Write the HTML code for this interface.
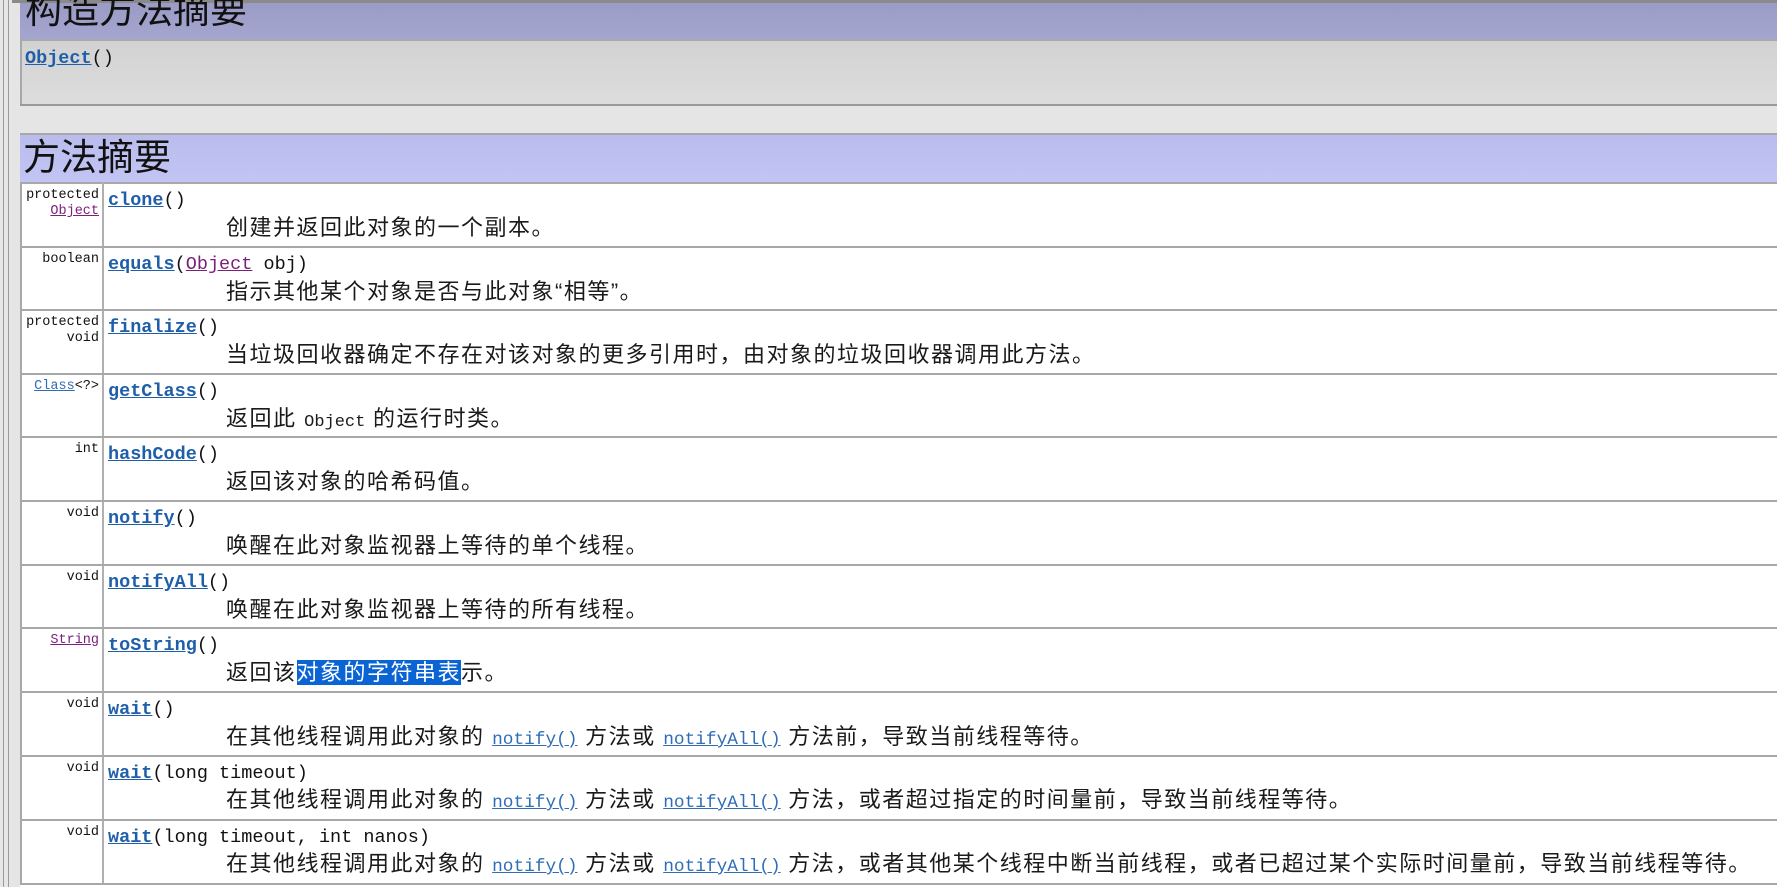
<!DOCTYPE html>
<html><head><meta charset="utf-8"><style>
body{margin:0;width:1777px;height:887px;overflow:hidden;background:#e4e5e4;position:relative;font-family:"Liberation Sans","Noto Sans CJK SC",sans-serif}
.a{position:absolute}
.vl{position:absolute;top:0;height:887px;width:1px;background:#9a9a9a}
.hl{position:absolute;left:20px;right:0;height:2px;background:#a8a8a8}
.t{position:absolute;right:1678px;text-align:right;font-family:"Liberation Mono",monospace;font-size:13.5px;line-height:16px;color:#111;white-space:nowrap}
.m{position:absolute;left:108px;font-family:"Liberation Mono",monospace;font-size:18.5px;color:#111;white-space:nowrap;line-height:22px}
.m b{color:#1f5fa9;text-decoration:underline}
.d{position:absolute;left:226px;font-family:"Liberation Sans","Noto Sans CJK SC",sans-serif;font-size:22px;color:#1a1a1a;white-space:nowrap;line-height:26px;letter-spacing:1.5px}
.d a{font-family:"Liberation Mono",monospace;font-size:17.8px;color:#2f6db5;text-decoration:underline;letter-spacing:0}
.mo{font-family:"Liberation Mono",monospace;font-size:17px;letter-spacing:0}
.pu{color:#7a1f7a;text-decoration:underline}
.bl{color:#2f6db5;text-decoration:underline}
</style></head><body>
<div class="a" style="left:0;top:0;width:1777px;height:3px;background:#8a8a8a"></div>
<div class="a" style="left:0;top:0;width:12px;height:887px;background:#e6e6e6"></div>
<div class="vl" style="left:3px"></div><div class="vl" style="left:8px"></div>
<div class="a" style="left:20px;top:3px;right:0;height:37px;background:linear-gradient(#9a9cc6,#a4a6d0)"></div>
<div class="a" style="left:25px;top:-14px;font-size:37px;color:#111;line-height:50px">构造方法摘要</div>
<div class="hl" style="top:39px"></div>
<div class="a" style="left:20px;top:41px;right:0;height:64px;background:linear-gradient(#d2d2d2,#dddddd)"></div>
<div class="a" style="left:20px;top:41px;width:2px;height:64px;background:#a8a8a8"></div>
<div class="m" style="left:25px;top:48px"><b>Object</b>()</div>
<div class="hl" style="top:104px;background:#999"></div>
<div class="hl" style="top:133px"></div>
<div class="a" style="left:20px;top:135px;right:0;height:47px;background:linear-gradient(#b9bcec,#c2c5f4)"></div>
<div class="a" style="left:23px;top:134px;font-size:37px;color:#111;line-height:48px">方法摘要</div>
<div class="hl" style="top:182px"></div>
<div class="a" style="left:20px;top:184px;right:0;height:703px;background:#fff"></div>
<div class="a" style="left:20px;top:182px;width:2px;height:703px;background:#a8a8a8"></div>
<div class="a" style="left:102px;top:182px;width:2px;height:703px;background:#b0b0b0"></div>

<div class="hl" style="top:246px"></div><div class="hl" style="top:309px"></div><div class="hl" style="top:373px"></div><div class="hl" style="top:436px"></div><div class="hl" style="top:500px"></div><div class="hl" style="top:564px"></div><div class="hl" style="top:627px"></div><div class="hl" style="top:691px"></div><div class="hl" style="top:755px"></div><div class="hl" style="top:819px"></div><div class="hl" style="top:883px"></div>

<div class="t" style="top:188px">protected<br><span class="pu">Object</span></div>
<div class="m" style="top:190px"><b>clone</b>()</div>
<div class="d" style="top:215px">创建并返回此对象的一个副本。</div>

<div class="t" style="top:252px">boolean</div>
<div class="m" style="top:254px"><b>equals</b>(<span class="pu">Object</span> obj)</div>
<div class="d" style="top:279px">指示其他某个对象是否与此对象“相等”。</div>

<div class="t" style="top:315px">protected<br>void</div>
<div class="m" style="top:317px"><b>finalize</b>()</div>
<div class="d" style="top:342px">当垃圾回收器确定不存在对该对象的更多引用时，由对象的垃圾回收器调用此方法。</div>

<div class="t" style="top:379px"><span class="bl">Class</span>&lt;?&gt;</div>
<div class="m" style="top:381px"><b>getClass</b>()</div>
<div class="d" style="top:406px">返回此 <span class="mo">Object</span> 的运行时类。</div>

<div class="t" style="top:442px">int</div>
<div class="m" style="top:444px"><b>hashCode</b>()</div>
<div class="d" style="top:469px">返回该对象的哈希码值。</div>

<div class="t" style="top:506px">void</div>
<div class="m" style="top:508px"><b>notify</b>()</div>
<div class="d" style="top:533px">唤醒在此对象监视器上等待的单个线程。</div>

<div class="t" style="top:570px">void</div>
<div class="m" style="top:572px"><b>notifyAll</b>()</div>
<div class="d" style="top:597px">唤醒在此对象监视器上等待的所有线程。</div>

<div class="t" style="top:633px"><span class="pu">String</span></div>
<div class="m" style="top:635px"><b>toString</b>()</div>
<div class="d" style="top:660px">返回该<span style="background:#0a64d4;color:#fff">对象的字符串表</span>示。</div>

<div class="t" style="top:697px">void</div>
<div class="m" style="top:699px"><b>wait</b>()</div>
<div class="d" style="top:724px">在其他线程调用此对象的 <a>notify()</a> 方法或 <a>notifyAll()</a> 方法前，导致当前线程等待。</div>

<div class="t" style="top:761px">void</div>
<div class="m" style="top:763px"><b>wait</b>(long timeout)</div>
<div class="d" style="top:787px">在其他线程调用此对象的 <a>notify()</a> 方法或 <a>notifyAll()</a> 方法，或者超过指定的时间量前，导致当前线程等待。</div>

<div class="t" style="top:825px">void</div>
<div class="m" style="top:827px"><b>wait</b>(long timeout, int nanos)</div>
<div class="d" style="top:851px">在其他线程调用此对象的 <a>notify()</a> 方法或 <a>notifyAll()</a> 方法，或者其他某个线程中断当前线程，或者已超过某个实际时间量前，导致当前线程等待。</div>
</body></html>
